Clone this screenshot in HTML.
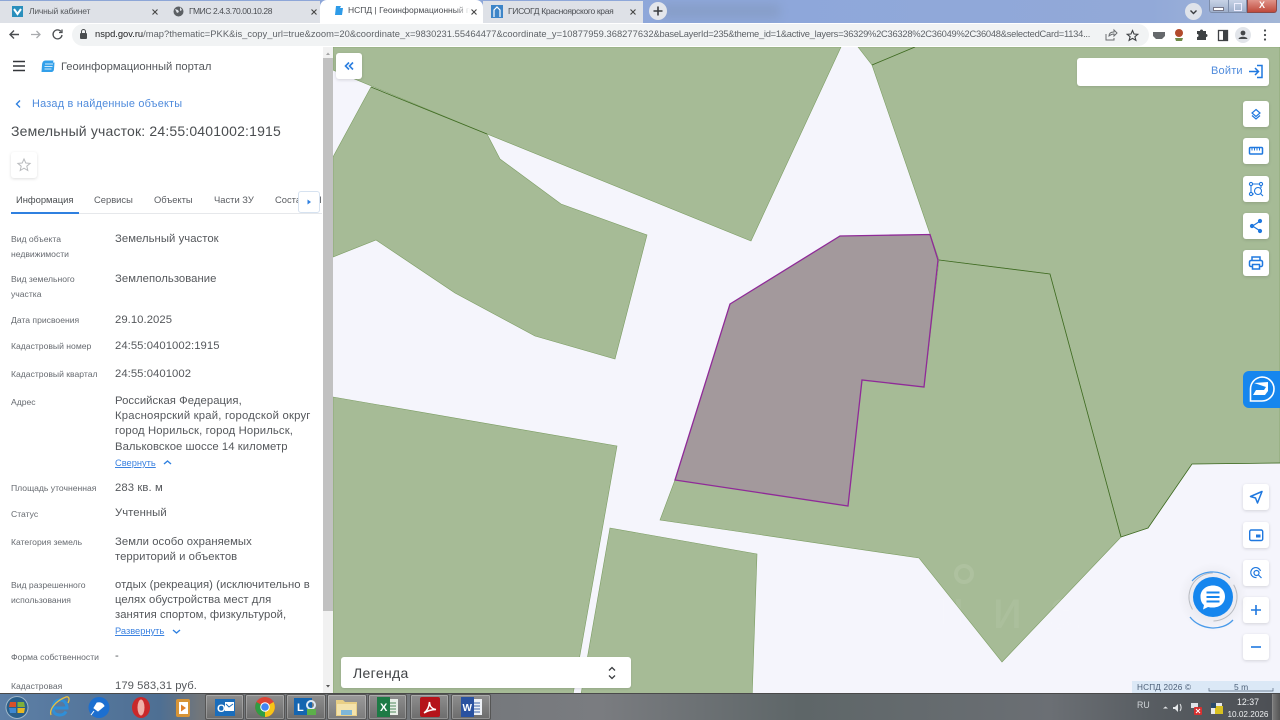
<!DOCTYPE html>
<html lang="ru"><head><meta charset="utf-8"><title>НСПД</title>
<style>
html,body{margin:0;padding:0;width:1280px;height:720px;overflow:hidden;background:#fff}
body{font-family:"Liberation Sans","DejaVu Sans",sans-serif;position:relative;filter:blur(.3px)}
.a{position:absolute;white-space:nowrap}
.tab{position:absolute;top:1px;height:22px;background:#dee1e7;color:#4a4d52;font-size:8.5px;line-height:21px}
.tab .t{position:absolute;left:28px;top:0}
.tab .ic{position:absolute;left:12px;top:5px;width:11px;height:11px}
.tab .xx{position:absolute;top:7px;width:8px;height:8px}
.lb{position:absolute;left:11px;font-size:8.6px;line-height:15.4px;color:#666a70;white-space:nowrap}
.v{position:absolute;left:115px;font-size:11.3px;line-height:15.2px;color:#55585c;white-space:nowrap;letter-spacing:.05px}
.lk{position:absolute;left:115px;font-size:9.3px;line-height:12px;color:#3b82e0;text-decoration:underline;white-space:nowrap}
.tb{position:absolute;top:194px;font-size:9.4px;line-height:12px;color:#5a5d62;white-space:nowrap}
.btn{position:absolute;left:1243px;width:26px;height:26px;background:#fff;border-radius:3px;box-shadow:0 1px 3px rgba(0,0,0,.14)}
.btn svg{position:absolute;left:0;top:0}
.tk{position:absolute;top:694px;height:26px;background:linear-gradient(#8e8e8e,#6c6c6c);border:1px solid #555;border-radius:2px;box-sizing:border-box;box-shadow:inset 0 0 0 1px rgba(255,255,255,.25)}
</style></head><body>

<!-- Tab strip -->
<div class="a" style="left:0;top:0;width:1280px;height:23px;background:linear-gradient(90deg,#8da6d6,#8ea7da 60%,#92a9d8 90%,#a3b6d6)"></div>
<div class="a" style="left:660px;top:4px;width:120px;height:14px;background:#7f93b4;opacity:.45;filter:blur(5px)"></div>

<div class="tab" style="left:0;width:160px"><svg class="ic" viewBox="0 0 11 11"><rect width="11" height="11" fill="#2a8fbc"/><path d="M2 3l3.500 5L9 3" stroke="#fff" stroke-width="2" fill="none"/></svg><span class="t" style="left:29px;color:#55585c;letter-spacing:-.2px">Личный кабинет</span><svg class="xx" style="left:151px" viewBox="0 0 8 8"><path d="M1.500 1.500l5 5M6.500 1.500l-5 5" stroke="#444" stroke-width="1.100"/></svg></div>
<div class="a" style="left:165px;top:4px;width:1px;height:16px;background:#a5a8ad"></div>
<div class="tab" style="left:160px;width:160px"><svg class="ic" style="left:13px" viewBox="0 0 11 11"><circle cx="5.500" cy="5.500" r="5" fill="#5c6064"/><path d="M2 3l3 1 1 2-2 1zM7 1l2 3-2 1z" fill="#dee1e7"/></svg><span class="t" style="left:29px;letter-spacing:-.42px">ГМИС 2.4.3.70.00.10.28</span><svg class="xx" style="left:150px" viewBox="0 0 8 8"><path d="M1.500 1.500l5 5M6.500 1.500l-5 5" stroke="#444" stroke-width="1.100"/></svg></div>
<div class="tab" style="left:320px;width:163px;background:#fff;border-radius:7px 7px 0 0;top:0;height:23px"><svg class="ic" style="left:13px" viewBox="0 0 11 11"><path d="M3 1h5L7 3h3L9 10H2z" fill="#2e9be8"/></svg><span class="t">НСПД | Геоинформационный п</span><div class="a" style="left:136px;top:0;width:14px;height:21px;background:linear-gradient(90deg,rgba(255,255,255,0),#fff)"></div><svg class="xx" style="left:150px;top:8px" viewBox="0 0 8 8"><path d="M1.500 1.500l5 5M6.500 1.500l-5 5" stroke="#444" stroke-width="1.100"/></svg></div>
<div class="tab" style="left:483px;width:160px"><svg class="ic" style="left:8px;width:12px;height:13px;top:4px" viewBox="0 0 12 13"><rect width="12" height="13" fill="#3d85c8"/><path d="M3 12V5l3-3 3 3v7" stroke="#fff" stroke-width="1.200" fill="none"/></svg><span class="t" style="left:25px;letter-spacing:-.32px">ГИСОГД Красноярского края</span><svg class="xx" style="left:146px" viewBox="0 0 8 8"><path d="M1.500 1.500l5 5M6.500 1.500l-5 5" stroke="#444" stroke-width="1.100"/></svg></div>
<div class="a" style="left:649px;top:2px;width:18px;height:18px;border-radius:50%;background:#e3e6eb"></div>
<svg class="a" style="left:649px;top:2px" width="18" height="18"><path d="M9 4.500v9M4.500 9h9" stroke="#3a3d40" stroke-width="1.600"/></svg>
<div class="a" style="left:1185px;top:3px;width:17px;height:17px;border-radius:50%;background:#dfe3ea"></div>
<svg class="a" style="left:1185px;top:3px" width="17" height="17"><path d="M5.500 7.500l3 3 3-3" stroke="#3a3d40" stroke-width="1.400" fill="none"/></svg>
<!-- window buttons -->
<div class="a" style="left:1209px;top:0;width:20px;height:13px;background:linear-gradient(#c8d3e6,#9fb0cc);border:1px solid #7d8daa;border-top:0;box-sizing:border-box;border-radius:0 0 0 3px"></div>
<div class="a" style="left:1213px;top:7px;width:9px;height:2px;background:#fff;border:1px solid #778"></div>
<div class="a" style="left:1229px;top:0;width:18px;height:13px;background:linear-gradient(#c8d3e6,#9fb0cc);border:1px solid #7d8daa;border-top:0;border-left:0;box-sizing:border-box"></div>
<div class="a" style="left:1234px;top:3px;width:6px;height:6px;border:1px solid #eef"></div>
<div class="a" style="left:1247px;top:0;width:30px;height:13px;background:linear-gradient(#e0948a,#c04a3c);border:1px solid #8a4a4a;border-top:0;box-sizing:border-box;border-radius:0 0 3px 0;color:#fff;font-size:9px;font-weight:bold;text-align:center;line-height:11px">X</div>

<!-- Address bar -->
<div class="a" style="left:0;top:23px;width:1280px;height:24px;background:#fff"></div>
<svg class="a" style="left:6px;top:26px" width="62" height="17" fill="none"><path d="M13 8.500H4.500M8 4.500l-4 4 4 4" stroke="#4a4d50" stroke-width="1.400"/><path d="M25 8.500h9M30.500 5L34 8.500 30.500 12" stroke="#a9abae" stroke-width="1.300"/><path d="M55 5.500a4.500 4.500 0 1 0 1 3.500M56 3.500v3h-3" stroke="#4a4d50" stroke-width="1.300"/></svg>
<div class="a" style="left:72px;top:24px;width:1077px;height:22px;border-radius:11px;background:#f1f3f4"></div>
<svg class="a" style="left:79px;top:29px" width="9" height="11"><rect x="1" y="4" width="7" height="6" rx="1" fill="#4a4d50"/><path d="M2.500 4V2.500a2 2 0 0 1 4 0V4" stroke="#4a4d50" fill="none"/></svg>
<div class="a" style="left:95px;top:28px;width:1000px;height:13px;overflow:hidden;font-size:9.35px;line-height:13px;color:#5f6368"><span style="color:#202124">nspd.gov.ru</span><span style="letter-spacing:.03px">/map?thematic=PKK&amp;is_copy_url=true&amp;zoom=20&amp;coordinate_x=9830231.55464477&amp;coordinate_y=10877959.368277632</span><span style="letter-spacing:-.25px">&amp;baseLayerId=235&amp;theme_id=1&amp;active_layers=36329%2C36328%2C36049%2C36048&amp;selectedCard=1134...</span></div>
<svg class="a" style="left:1103px;top:27px" width="180" height="17" fill="none">
<path d="M3 7v6h8v-2" stroke="#6a6d70"/><path d="M6 9c0-3 2-4 5-4V3l3 3-3 3V7c-2 0-3 .5-5 2z" stroke="#6a6d70"/>
<path d="M29.500 3.500l1.500 3.500 3.800.3-2.900 2.400 1 3.700-3.400-2-3.400 2 1-3.700-2.900-2.400 3.800-.3z" stroke="#3e4144" stroke-width="1.100"/>
<path d="M50 5h12v4l-3 3h-6l-3-3z" fill="#66696c"/>
<circle cx="76" cy="6" r="4" fill="#b24a2c"/><path d="M72 11h8l-1 3h-6z" fill="#6f8a4a"/>
<path d="M94 4h3a1.500 1.500 0 0 1 3 0h3v3a1.500 1.500 0 0 1 0 3v3H94v-3a1.500 1.500 0 0 0 0-3z" fill="#3e4144"/>
<rect x="115.500" y="3.500" width="9" height="10" stroke="#3e4144" stroke-width="1.300"/><rect x="120" y="3.500" width="4.500" height="10" fill="#3e4144"/>
<circle cx="140" cy="8" r="8" fill="#e2e5ea"/><circle cx="140" cy="6" r="2.400" fill="#44474a"/><path d="M135.500 12c.5-3 8.500-3 9 0z" fill="#44474a"/>
<circle cx="162" cy="3.500" r="1.100" fill="#44474a"/><circle cx="162" cy="8" r="1.100" fill="#44474a"/><circle cx="162" cy="12.500" r="1.100" fill="#44474a"/>
</svg>

<!-- Map -->
<svg class="a" style="left:0;top:47px" width="1280" height="647" viewBox="0 47 1280 647">
<rect x="0" y="47" width="1280" height="647" fill="#f5f5fc"/>
<g fill="#a6bb96" stroke="#7c9d63" stroke-width=".6">
<path d="M333 47H841L751 241L487 134L333 70z"/>
<path d="M371 87L487 134L500 159L561 204L647 235L615 359L535 336L455 293L376 240L333 257V157z"/>
<path d="M333 397L617 446L572 700H333z"/>
<path d="M610 528L757 554L752 700H580z"/>
<path d="M858 47L872 65L915 47z"/>
<path d="M915 47L872 65L930 234L939 260L1050 274L1121 537L1148 528L1192 464L1280 463V47z"/>
<path d="M939 260L1050 274L1121 537L1002 662L919 558L660 520L675 480L848 506L862 380L924 387z"/>
</g>
<path d="M872 65L915 47M939 260L1050 274L1121 537M371 87L487 134M1121 537L1148 528L1192 464L1280 463" fill="none" stroke="#3f6b22" stroke-width=".8"/>
<path d="M730 304L840 236L930 234.500L938 260L924 387L862 380L848 506L675 480z" fill="#a3999c" stroke="#8f2a98" stroke-width="1.300"/>
<!-- watermark -->
<text x="935" y="628" font-size="54" textLength="200" lengthAdjust="spacing" fill="#fff" opacity=".06" font-family="Liberation Sans,sans-serif">циан</text>
<circle cx="964" cy="574" r="8" fill="none" stroke="#fff" stroke-width="4" opacity=".09"/>
</svg>

<!-- Sidebar -->
<div class="a" style="left:0;top:47px;width:333px;height:647px;background:#fff;overflow:hidden">
 <div class="a" style="left:323px;top:0;width:10px;height:647px;background:#f1f1f1"></div>
 <div class="a" style="left:323px;top:11px;width:10px;height:553px;background:#c1c1c1"></div>
 <svg class="a" style="left:323px;top:0" width="10" height="647"><path d="M3 8l2-2.500L7 8z" fill="#a3a3a3"/><path d="M3 638l2 2.500 2-2.500z" fill="#555"/></svg>
</div>
<svg class="a" style="left:12px;top:60px" width="14" height="12"><path d="M1 1.500h12M1 6h12M1 10.500h12" stroke="#33363a" stroke-width="1.500"/></svg>
<svg class="a" style="left:40px;top:59px" width="15" height="15"><path d="M5.500 1.500h8L13 3.500h1.500L14 10c-.2 2-1 3-3 3H1.500L2 6c.2-3 1.500-4.500 3.500-4.500z" fill="#33a0ea"/><path d="M5 5h8M4.500 7.500h8M4.500 10h7" stroke="#cfeafb" stroke-width="1"/></svg>
<div class="a" style="left:61px;top:60px;font-size:11.2px;line-height:15px;color:#55585c">Геоинформационный портал</div>
<svg class="a" style="left:14px;top:99px" width="9" height="10"><path d="M6 1.500L2.500 5 6 8.500" stroke="#2f80e0" stroke-width="1.400" fill="none"/></svg>
<div class="a" style="left:32px;top:97px;font-size:10.9px;line-height:15px;color:#4f8bdc;letter-spacing:.21px">Назад в найденные объекты</div>
<div class="a" style="left:11px;top:122px;font-size:14px;line-height:18px;color:#4a4d50;letter-spacing:.17px">Земельный участок: 24:55:0401002:1915</div>
<div class="a" style="left:11px;top:152px;width:26px;height:26px;background:#fff;border-radius:3px;box-shadow:0 1px 3px rgba(0,0,0,.13)"></div>
<svg class="a" style="left:16px;top:157px" width="16" height="16"><path d="M8 2l1.800 4 4.300.4-3.300 2.800 1 4.300L8 11.200l-3.800 2.300 1-4.300L1.900 6.400 6.200 6z" fill="none" stroke="#b8babd" stroke-width="1"/></svg>

<div class="tb" style="left:16px;color:#4a4d50">Информация</div>
<div class="tb" style="left:94px">Сервисы</div>
<div class="tb" style="left:154px">Объекты</div>
<div class="tb" style="left:214px">Части ЗУ</div>
<div class="tb" style="left:275px;width:47px;overflow:hidden">Состав ЕН</div>
<div class="a" style="left:11px;top:213px;width:311px;height:1px;background:#e6e8eb"></div>
<div class="a" style="left:11px;top:212px;width:68px;height:2px;background:#2f80e0"></div>
<div class="a" style="left:298px;top:191px;width:22px;height:22px;box-sizing:border-box;background:#fff;border:1px solid #d6e2f0;border-radius:3px"></div>
<svg class="a" style="left:305px;top:198px" width="8" height="8"><path d="M2.500 1.500L6 4 2.500 6.500z" fill="#2f80e0"/></svg>

<div class="lb" style="top:232px">Вид объекта<br>недвижимости</div>
<div class="v" style="top:232px">Земельный участок</div>
<div class="lb" style="top:272px">Вид земельного<br>участка</div>
<div class="v" style="top:272px">Землепользование</div>
<div class="lb" style="top:313px">Дата присвоения</div>
<div class="v" style="top:313px">29.10.2025</div>
<div class="lb" style="top:339px">Кадастровый номер</div>
<div class="v" style="top:339px">24:55:0401002:1915</div>
<div class="lb" style="top:367px">Кадастровый квартал</div>
<div class="v" style="top:367px">24:55:0401002</div>
<div class="lb" style="top:395px">Адрес</div>
<div class="v" style="top:394px">Российская Федерация,<br><span style="letter-spacing:.2px">Красноярский край, городской округ</span><br><span style="letter-spacing:.13px">город Норильск, город Норильск,</span><br>Вальковское шоссе 14 километр</div>
<div class="lk" style="top:457px">Свернуть</div>
<svg class="a" style="left:162px;top:458px" width="11" height="9"><path d="M2 6l3.500-3L9 6" stroke="#2f80e0" stroke-width="1.400" fill="none"/></svg>
<div class="lb" style="top:481px">Площадь уточненная</div>
<div class="v" style="top:481px;letter-spacing:.1px">283 кв. м</div>
<div class="lb" style="top:507px">Статус</div>
<div class="v" style="top:506px">Учтенный</div>
<div class="lb" style="top:535px">Категория земель</div>
<div class="v" style="top:535px">Земли особо охраняемых<br>территорий и объектов</div>
<div class="lb" style="top:578px">Вид разрешенного<br>использования</div>
<div class="v" style="top:578px">отдых (рекреация) (исключительно в<br>целях обустройства мест для<br>занятия спортом, физкультурой,</div>
<div class="lk" style="top:625px">Развернуть</div>
<svg class="a" style="left:171px;top:627px" width="11" height="9"><path d="M2 3l3.500 3L9 3" stroke="#2f80e0" stroke-width="1.400" fill="none"/></svg>
<div class="lb" style="top:650px">Форма собственности</div>
<div class="v" style="top:649px">-</div>
<div class="lb" style="top:679px">Кадастровая</div>
<div class="v" style="top:679px">179 583,31 руб.</div>

<!-- Map controls -->
<div class="a" style="left:336px;top:53px;width:26px;height:26px;background:#fff;border-radius:3px;box-shadow:0 1px 3px rgba(0,0,0,.14)"></div>
<svg class="a" style="left:336px;top:53px" width="26" height="26"><path d="M13 9.500L9.500 13l3.500 3.500M17 9.500L13.500 13l3.500 3.500" stroke="#2b7fe0" stroke-width="1.600" fill="none"/></svg>

<div class="a" style="left:1077px;top:58px;width:192px;height:28px;background:#fff;border-radius:3px;box-shadow:0 1px 2px rgba(0,0,0,.1)"></div>
<div class="a" style="left:1211px;top:64px;font-size:11px;line-height:15px;color:#4f8bdc;letter-spacing:.2px">Войти</div>
<svg class="a" style="left:1248px;top:64px" width="16" height="15" fill="none" stroke="#1f78df" stroke-width="1.500"><path d="M1 7.500h9M7 4l3.500 3.500L7 11"/><path d="M9 1.500h5v12H9"/></svg>

<div class="btn" style="top:101px"><svg width="26" height="26" fill="none" stroke="#1f78df" stroke-width="1.200"><path d="M13 8.500l4 3.500-4 3.500-4-3.500z"/><path d="M9 14.500l4 3.500 4-3.500"/></svg></div>
<div class="btn" style="top:138px"><svg width="26" height="26" fill="none" stroke="#1f78df" stroke-width="1.500"><rect x="6.500" y="9.500" width="13" height="6.500" rx="1"/><path d="M9 10v2.500M11.500 10v2.500M14 10v2.500M16.500 10v2.500" stroke-width="1"/></svg></div>
<div class="btn" style="top:176px"><svg width="26" height="26" fill="none" stroke="#1f78df" stroke-width="1.100"><circle cx="8" cy="8" r="1.600"/><circle cx="18" cy="8" r="1.600"/><circle cx="8" cy="18" r="1.600"/><circle cx="15" cy="15" r="3.500"/><path d="M9.600 8h6.800M8 9.600v6.800M9.600 18H11M18 10v2M17.500 17.500l2.500 2.500"/></svg></div>
<div class="btn" style="top:213px"><svg width="26" height="26" fill="none" stroke="#1f78df" stroke-width="1.200"><path d="M16.500 8.500L9.500 13l7 4.500"/><circle cx="17" cy="8" r="1.500" fill="#1f78df"/><circle cx="9" cy="13" r="1.500" fill="#1f78df"/><circle cx="17" cy="18" r="1.500" fill="#1f78df"/></svg></div>
<div class="btn" style="top:250px"><svg width="26" height="26" fill="none" stroke="#1f78df" stroke-width="1.500"><path d="M9 10.500V7h8v3.500"/><rect x="6.500" y="10.500" width="13" height="6" rx="1.500"/><rect x="9.500" y="14.500" width="7" height="4.500" fill="#fff"/></svg></div>

<div class="a" style="left:1243px;top:371px;width:40px;height:37px;background:#1686ee;border-radius:6px 0 0 6px"></div>
<svg class="a" style="left:1247px;top:375px" width="30" height="30" fill="none" stroke="#fff" stroke-width="1.600"><path d="M15 2a12 12 0 0 1 12 12 12 12 0 0 1-12 12H3.500V14A12 12 0 0 1 15 2z"/><path d="M7 8l14-1v9l-3 4H6l3-5h8l2-3z" fill="#fff" stroke="none"/><path d="M11 12l5 1-2 2z" fill="#1686ee" stroke="none"/></svg>

<div class="btn" style="top:484px"><svg width="26" height="26" fill="none" stroke="#1f78df" stroke-width="1.500" stroke-linejoin="round"><path d="M19 7.500L7.500 12.500l5 1.500 2 5z"/></svg></div>
<div class="btn" style="top:522px"><svg width="26" height="26" fill="none" stroke="#1f78df" stroke-width="1.400"><rect x="6.700" y="8" width="13" height="10.500" rx="1.500"/><rect x="13" y="12.500" width="4.500" height="3" fill="#1f78df" stroke="none"/></svg></div>
<div class="btn" style="top:560px"><svg width="26" height="26" fill="none" stroke="#1f78df" stroke-width="1.200"><path d="M17.500 11a5 5 0 1 0-4 6.500"/><circle cx="13.500" cy="13" r="2.500"/><path d="M15.500 15l3 3"/></svg></div>
<div class="btn" style="top:597px"><svg width="26" height="26"><path d="M13 8v10M8 13h10" stroke="#1f78df" stroke-width="1.600"/></svg></div>
<div class="btn" style="top:634px"><svg width="26" height="26"><path d="M8 13h10" stroke="#1f78df" stroke-width="1.600"/></svg></div>

<!-- Chat widget -->
<div class="a" style="left:1178px;top:562px;width:70px;height:70px;border-radius:50%;background:radial-gradient(circle,rgba(0,0,0,.1),rgba(0,0,0,0) 70%)"></div>
<svg class="a" style="left:1180px;top:560px" width="66" height="75" fill="none">
<circle cx="33" cy="37" r="24" stroke="#b9bcc2" stroke-width="1" stroke-dasharray="50 25" transform="rotate(150 33 37)"/>
<path d="M12 21A28 28 0 0 1 50 18" stroke="#4a9bea" stroke-width="1.200"/>
<path d="M10 57C20 70 42 72 53 60" stroke="#4a9bea" stroke-width="1.300"/>
<circle cx="33" cy="37" r="20" fill="#1686ee"/>
<path d="M33 26c7 0 12 4.500 12 11s-5 11-12 11c-2 0-3 0-5-.5l-5 2.500 1-4.500c-2.500-2-3.500-5-3.500-8.500 0-6.500 5.500-11 12.500-11z" fill="#fff" transform="translate(0 -.5)"/>
<path d="M26.500 32.500h13M26.500 37h13M26.500 41.500h13" stroke="#1686ee" stroke-width="2"/>
</svg>

<!-- Legend -->
<div class="a" style="left:341px;top:657px;width:290px;height:31px;background:#fff;border-radius:3px;box-shadow:0 1px 2px rgba(0,0,0,.1)"></div>
<div class="a" style="left:353px;top:664px;font-size:14px;line-height:18px;color:#404346;letter-spacing:.35px">Легенда</div>
<svg class="a" style="left:606px;top:665px" width="12" height="16" fill="none" stroke="#3a3d40" stroke-width="1.300"><path d="M3 5.500L6 2.500l3 3M3 10.500l3 3 3-3"/></svg>

<div class="a" style="left:1132px;top:681px;width:148px;height:12px;background:#dbe8f6"></div>
<div class="a" style="left:1137px;top:682px;font-size:8.2px;line-height:11px;color:#4d6078;letter-spacing:.2px">НСПД 2026 ©</div>
<div class="a" style="left:1234px;top:682px;font-size:8.5px;line-height:11px;color:#4d6078">5 m</div>
<svg class="a" style="left:1208px;top:685px" width="72" height="7"><path d="M1 3v3h64V3" fill="none" stroke="#55667c" stroke-width=".7"/></svg>

<!-- Taskbar -->
<div class="a" style="left:0;top:693px;width:1280px;height:27px;background:linear-gradient(90deg,#5d7fa6 0,#4e6f93 160px,#72767a 200px,#75787c 480px,#7a7c80 600px,#5e6668 800px,#6b6f74 1050px,#585d62 1150px,#4c4f54 1280px);border-top:1px solid #4a4a4a;box-sizing:border-box"></div>

<svg class="a" style="left:4px;top:695px" width="26" height="25"><circle cx="13" cy="12.500" r="11" fill="#2a5f8a"/><circle cx="13" cy="12.500" r="11" fill="none" stroke="#9fb6c8" stroke-width="1"/><path d="M6 7h6v5H5z" fill="#d8502a"/><path d="M13.500 7H20l1 5h-7.500z" fill="#7fb03a"/><path d="M5 13h7v5H6z" fill="#3e88d2"/><path d="M13.500 13H21l-1 5h-6.500z" fill="#e8b820"/></svg>
<svg class="a" style="left:48px;top:695px" width="24" height="24" fill="none"><path d="M4 13h15c0-5-3-8-7-8s-7 3-7 8 3 7 7 7c3 0 5-1.500 6-3.500" stroke="#2f8fd8" stroke-width="3"/><path d="M3 20C1 15 7 6 18 2c3-1 4 2 2 6" stroke="#e8c040" stroke-width="1.300"/></svg>
<svg class="a" style="left:86px;top:696px" width="26" height="24"><circle cx="13" cy="11.500" r="10.500" fill="#1c6fd0"/><path d="M8 15l-3 4M11 7c4-1 6 1 7 3l-6 5-4-3z" fill="#fff" stroke="#fff"/></svg>
<svg class="a" style="left:129px;top:695px" width="24" height="25"><ellipse cx="12" cy="12.500" rx="9" ry="10.500" fill="#c9282a"/><ellipse cx="12" cy="12.500" rx="3.500" ry="8" fill="#f0b0a8"/></svg>
<svg class="a" style="left:172px;top:696px" width="22" height="24"><rect x="4" y="3" width="14" height="18" rx="2" fill="#d79436"/><rect x="7" y="6" width="9" height="12" fill="#fff"/><path d="M9 8.500l5 3.500-5 3.500z" fill="#e0802a"/></svg>

<div class="tk" style="left:205px;width:39px"></div>
<svg class="a" style="left:214px;top:697px" width="22" height="21"><rect x="1" y="2" width="20" height="17" fill="#1a6dbb"/><rect x="11" y="5" width="9" height="9" fill="#fff"/><path d="M12 7l3 3 4-3" stroke="#1a6dbb" fill="none"/><text x="3" y="15" font-size="11" font-weight="bold" fill="#fff" font-family="Liberation Sans">O</text></svg>
<div class="tk" style="left:245px;width:40px"></div>
<svg class="a" style="left:254px;top:696px" width="22" height="22"><circle cx="11" cy="11" r="10" fill="#dd4436"/><path d="M11 11L2.500 6A10 10 0 0 0 11 21z" fill="#2f9d45"/><path d="M11 11l8.500-5A10 10 0 0 1 11 21z" fill="#f5c518"/><circle cx="11" cy="11" r="4.800" fill="#fff"/><circle cx="11" cy="11" r="3.800" fill="#4285f4"/></svg>
<div class="tk" style="left:286px;width:40px"></div>
<svg class="a" style="left:293px;top:696px" width="27" height="22"><rect x="1" y="2" width="18" height="17" fill="#1565b0"/><text x="4" y="15" font-size="11" font-weight="bold" fill="#fff" font-family="Liberation Sans">L</text><circle cx="18" cy="9" r="4" fill="none" stroke="#dfeaf5" stroke-width="2"/><rect x="14" y="13" width="9" height="6" fill="#5cb04a"/></svg>
<div class="tk" style="left:327px;width:40px;background:linear-gradient(#9a9a9a,#7b7b7b)"></div>
<svg class="a" style="left:334px;top:697px" width="25" height="21"><path d="M2 3h7l2 2h12v14H2z" fill="#e9cf86"/><rect x="3" y="7" width="19" height="11" fill="#f4e3ac"/><rect x="7" y="13" width="11" height="5" fill="#7fb7d8"/></svg>
<div class="tk" style="left:368px;width:39px"></div>
<svg class="a" style="left:376px;top:696px" width="24" height="22"><rect x="10" y="3" width="12" height="16" fill="#e9efe9"/><path d="M12 7h8M12 10h8M12 13h8M12 16h8" stroke="#4f8a5c"/><rect x="1" y="1" width="13" height="20" fill="#1d7a45"/><text x="4" y="15" font-size="11" font-weight="bold" fill="#fff" font-family="Liberation Sans">X</text></svg>
<div class="tk" style="left:410px;width:39px"></div>
<svg class="a" style="left:419px;top:696px" width="22" height="22"><rect x="1" y="1" width="20" height="20" rx="2" fill="#b5141a"/><path d="M5 17c3-2 5-6 5.500-11 .3 5 2.500 7 6.500 7.500-4 0-8 1-12 3.500z" fill="none" stroke="#fff" stroke-width="1.500"/></svg>
<div class="tk" style="left:451px;width:40px"></div>
<svg class="a" style="left:460px;top:696px" width="24" height="22"><rect x="10" y="3" width="12" height="16" fill="#eef1f6"/><path d="M12 7h8M12 10h8M12 13h8M12 16h8" stroke="#4268a8"/><rect x="1" y="1" width="13" height="20" fill="#2a52a0"/><text x="2.500" y="15" font-size="10" font-weight="bold" fill="#fff" font-family="Liberation Sans">W</text></svg>

<!-- Tray -->
<div class="a" style="left:1137px;top:700px;font-size:8.800px;line-height:11px;color:#d0d4d8">RU</div>
<svg class="a" style="left:1155px;top:698px" width="100" height="18"><path d="M8 10.500l2.500-2 2.500 2z" fill="#e6e8ea"/><path d="M18 9h2l3-3v8l-3-3h-2z" fill="#e6e8ea"/><path d="M25 6c1.500 2 1.500 5 0 7" stroke="#e6e8ea" fill="none"/><rect x="36" y="5" width="7" height="5" fill="#dfe3e8"/><rect x="39" y="9" width="8" height="8" rx="1" fill="#d83030"/><path d="M41 11l4 4M45 11l-4 4" stroke="#fff"/><rect x="56" y="5" width="11" height="11" fill="#e8e8e8"/><rect x="60" y="8" width="8" height="8" fill="#d8c020"/><rect x="56" y="5" width="5" height="5" fill="#2a4a6a"/></svg>
<div class="a" style="left:1226px;top:696px;width:44px;text-align:center;font-size:8.800px;line-height:12px;color:#eef0f2">12:37<br><span style="font-size:8.200px">10.02.2026</span></div>
<div class="a" style="left:1272px;top:694px;width:8px;height:26px;background:linear-gradient(90deg,#777,#555);border-left:1px solid #888;box-sizing:border-box"></div>
</body></html>
